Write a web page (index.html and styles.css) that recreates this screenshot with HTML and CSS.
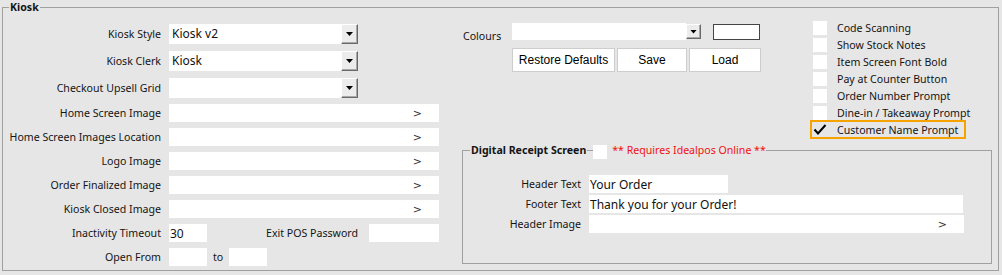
FILE: index.html
```html
<!DOCTYPE html>
<html lang="en">
<head>
  <meta charset="UTF-8">
  <title>Kiosk</title>
  <link rel="stylesheet" href="styles.css">
</head>
<body>
  <fieldset class="group kiosk">
    <legend class="kiosk-title">Kiosk</legend>
    <div class="kiosk-body">

      <div class="form-col">
        <div class="row combo-row">
          <label>Kiosk Style</label>
          <div class="combo"><span class="combo-value">Kiosk v2</span><span class="combo-btn"></span></div>
        </div>
        <div class="row combo-row">
          <label>Kiosk Clerk</label>
          <div class="combo"><span class="combo-value">Kiosk</span><span class="combo-btn"></span></div>
        </div>
        <div class="row combo-row last-combo">
          <label>Checkout Upsell Grid</label>
          <div class="combo"><span class="combo-value"></span><span class="combo-btn"></span></div>
        </div>
        <div class="row">
          <label>Home Screen Image</label>
          <div class="field browse">&gt;</div>
        </div>
        <div class="row">
          <label>Home Screen Images Location</label>
          <div class="field browse">&gt;</div>
        </div>
        <div class="row">
          <label>Logo Image</label>
          <div class="field browse">&gt;</div>
        </div>
        <div class="row">
          <label>Order Finalized Image</label>
          <div class="field browse">&gt;</div>
        </div>
        <div class="row">
          <label>Kiosk Closed Image</label>
          <div class="field browse">&gt;</div>
        </div>
        <div class="row">
          <label>Inactivity Timeout</label>
          <div class="field short">30</div>
          <span class="inline-label">Exit POS Password</span>
          <div class="field password"></div>
        </div>
        <div class="row">
          <label>Open From</label>
          <div class="field short"></div>
          <span class="to">to</span>
          <div class="field short"></div>
        </div>
      </div>

      <div class="side-col">
        <div class="side-top">
          <div class="colours">
            <div class="colours-row">
              <label>Colours</label>
              <div class="combo small"><span class="combo-value"></span><span class="combo-btn"></span></div>
              <div class="swatch"></div>
            </div>
            <div class="buttons">
              <button class="btn restore">Restore Defaults</button>
              <button class="btn save">Save</button>
              <button class="btn load">Load</button>
            </div>
          </div>

          <ul class="checks">
            <li class="check"><span class="box"></span>Code Scanning</li>
            <li class="check"><span class="box"></span>Show Stock Notes</li>
            <li class="check"><span class="box"></span>Item Screen Font Bold</li>
            <li class="check"><span class="box"></span>Pay at Counter Button</li>
            <li class="check"><span class="box"></span>Order Number Prompt</li>
            <li class="check"><span class="box"></span>Dine-in / Takeaway Prompt</li>
            <li class="check on">
              <span class="box ticked">
                <svg width="14" height="14" viewBox="0 0 14 14"><path d="M1.5 6.5 L5 10.5 L12.5 2" fill="none" stroke="#000" stroke-width="2"/></svg>
              </span>Customer Name Prompt
            </li>
          </ul>
        </div>

        <fieldset class="group receipt">
          <legend class="receipt-title">
            <span class="title-text">Digital Receipt Screen</span>
            <span class="dash"></span>
            <span class="box"></span>
            <span class="note">** Requires Idealpos Online **</span>
          </legend>
          <div class="receipt-body">
            <div class="row">
              <label>Header Text</label>
              <div class="field value header">Your Order</div>
            </div>
            <div class="row">
              <label>Footer Text</label>
              <div class="field value footer">Thank you for your Order!</div>
            </div>
            <div class="row">
              <label>Header Image</label>
              <div class="field browse wide">&gt;</div>
            </div>
          </div>
        </fieldset>
      </div>

    </div>
  </fieldset>
</body>
</html>
```

FILE: styles.css
```css
body {
  margin: 0;
  background: #e6e6e6;
  font-family: "Noto Sans", Tahoma, sans-serif;
  font-size: 10.6px;
  color: #141414;
}
.group {
  margin: 0;
  padding: 0;
  min-width: 0;
  border: 1px solid #a0a0a0;
}
.kiosk {
  margin: 0 3px 0 2px;
  padding: 10px 0 4px 0;
}
.kiosk-title {
  font-weight: bold;
  line-height: 14px;
  padding: 0 1px;
  margin-left: 6px;
}
.kiosk-body {
  display: grid;
  grid-template-columns: 436px 1fr;
  column-gap: 23px;
}
.form-col {
  display: flex;
  flex-direction: column;
  gap: 6px;
}
.row {
  display: flex;
  align-items: center;
  height: 18px;
}
.row label {
  flex: none;
  width: 158px;
  margin-right: 8px;
  text-align: right;
  white-space: nowrap;
}
.combo-row {
  height: 20px;
  margin-bottom: 1px;
}
.combo-row.last-combo {
  margin-bottom: 0;
}
.combo {
  display: flex;
  height: 20px;
}
.combo-value {
  width: 172px;
  background: #fff;
  padding-left: 3px;
  box-sizing: border-box;
  font-size: 12px;
  line-height: 20px;
  color: #111;
}
.combo-btn {
  width: 17px;
  box-sizing: border-box;
  border: 1px solid;
  border-color: #fff #6a6a6a #6a6a6a #fff;
  background: #ececec;
  box-shadow: inset -1px -1px #a8a8a8;
  display: flex;
  align-items: center;
  justify-content: center;
}
.combo-btn::after {
  content: "";
  width: 7px;
  height: 4px;
  background: #000;
  clip-path: polygon(0 0, 100% 0, 50% 100%);
}
.field {
  height: 18px;
  background: #fff;
  box-sizing: border-box;
  display: flex;
  align-items: center;
}
.field.browse {
  width: 270px;
  justify-content: flex-end;
  padding-right: 17px;
  font-family: Tahoma, "DejaVu Sans", sans-serif;
  font-size: 11px;
  color: #333;
}
.field.short {
  width: 38px;
  padding-left: 1px;
  font-size: 12px;
}
.inline-label {
  flex: 1;
  text-align: right;
  margin-right: 11px;
  white-space: nowrap;
}
.field.password {
  width: 70px;
}
.to {
  margin: 0 6px;
}
.side-top {
  display: flex;
}
.colours {
  width: 348px;
  margin-top: -1px;
}
.colours-row {
  display: flex;
  align-items: center;
  height: 17px;
}
.colours-row label {
  width: 49px;
  padding: 9px 0 0 1px;
}
.combo.small {
  height: 17px;
}
.combo.small .combo-value {
  width: 174px;
}
.combo.small .combo-btn {
  width: 15px;
  height: 15px;
  align-self: center;
}
.swatch {
  width: 47px;
  height: 16px;
  margin-left: 12px;
  box-sizing: border-box;
  border: 1px solid #444;
  background: #fff;
}
.buttons {
  display: flex;
  gap: 2px;
  margin: 8px 0 0 50px;
}
.btn {
  height: 24px;
  padding: 0;
  background: #fff;
  border: 1px solid #cdcdcd;
  font-family: "Liberation Sans", Arial, sans-serif;
  font-size: 12px;
  color: #000;
}
.restore {
  width: 103px;
}
.save {
  width: 70px;
}
.load {
  width: 72px;
}
.checks {
  list-style: none;
  margin: -4px 0 0 2px;
  padding: 0;
}
.check {
  display: flex;
  align-items: center;
  height: 15px;
  margin-bottom: 2px;
  white-space: nowrap;
}
.box {
  flex: none;
  width: 14px;
  height: 14px;
  background: #fff;
}
.check .box {
  margin: 0 10px 0 1px;
}
.check.on {
  width: 152px;
  outline: 2px solid #f6a300;
}
.box.ticked {
  background: transparent;
}
.box.ticked svg {
  display: block;
}
.receipt {
  margin: 3px 6px 0 0;
  padding: 17px 0 30px 0;
}
.receipt-title {
  display: flex;
  align-items: flex-start;
  height: 16px;
  padding: 0;
  margin-left: 7px;
}
.title-text {
  font-weight: bold;
  line-height: 16px;
  padding: 0 1px;
}
.dash {
  width: 6px;
  height: 1px;
  margin-top: 8px;
  background: #a0a0a0;
}
.receipt-title .box {
  margin-top: 3px;
}
.note {
  margin-left: 5px;
  line-height: 16px;
  color: #f01010;
}
.receipt-body {
  display: flex;
  flex-direction: column;
  gap: 2px;
}
.receipt-body .row label {
  width: 118px;
}
.field.value {
  padding-left: 1px;
  font-size: 12px;
  color: #111;
}
.field.header {
  width: 139px;
}
.field.footer {
  width: 374px;
}
.field.browse.wide {
  width: 375px;
}
```
